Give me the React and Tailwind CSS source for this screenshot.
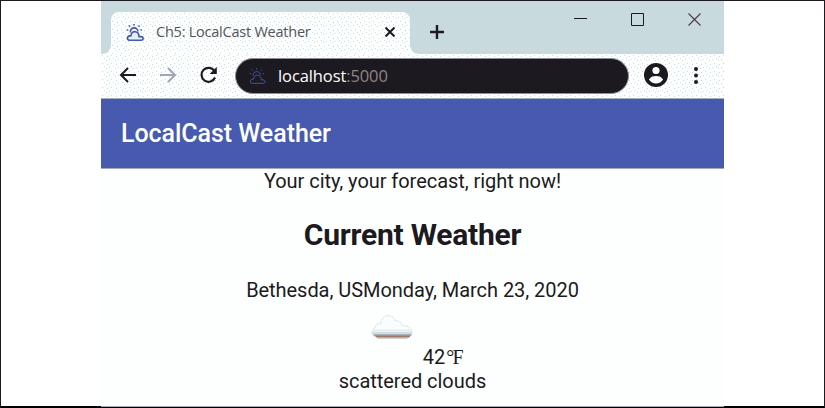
import React from "react";

function Dither({ id }) {
  return (
    <svg className="absolute inset-0 h-full w-full" shapeRendering="crispEdges" aria-hidden="true">
      <defs>
        <pattern id={id} width="9" height="8" patternUnits="userSpaceOnUse">
          <path fill="#c9dcdf" d="M1 1h1v1h-1zM6 2h1v1h-1zM3 4h1v1h-1zM8 5h1v1h-1zM5 6h1v1h-1z" />
        </pattern>
      </defs>
      <rect width="100%" height="100%" fill={`url(#${id})`} />
    </svg>
  );
}

function WeatherIcon({ className, cloud }) {
  return (
    <svg className={className} viewBox="0 0 18 18" fill="none" stroke="#4658ac" aria-hidden="true">
      <path d="M4.500 8.500A3.800 3.800 0 1 1 12 7.500" />
      <path
        fill={cloud}
        d="M3.500 16.200h11.500c2.800 0 2.800-3.400 0-3.600h-2C13 6.200 5 6.200 5 11.600 .5 11.600.5 16.200 3.500 16.200z"
      />
      <path d="M8 0v1.500M3 1.500l1 1.200M13.500 1.500l-1 1.200M.8 6h1.500M14.500 6H16" />
    </svg>
  );
}

function Tab() {
  return (
    <div className="relative ml-[10px] mt-[11px] h-[42px] w-[299px]">
      <svg className="absolute -left-[10px] bottom-0 h-[10px] w-[10px]" viewBox="0 0 10 10" aria-hidden="true">
        <path d="M10 0v10H0Q10 10 10 0z" fill="#fcfffe" />
      </svg>
      <svg className="absolute -right-[10px] bottom-0 h-[10px] w-[10px]" viewBox="0 0 10 10" aria-hidden="true">
        <path d="M0 0v10h10Q0 10 0 0z" fill="#fcfffe" />
      </svg>
      <div className="relative flex h-full items-center overflow-hidden rounded-t-[8px] bg-[#fcfffe] pl-[15px] pr-[15px]">
        <Dither id="tab-dots" />
        <WeatherIcon className="relative h-[18px] w-[18px] stroke-[1.6]" cloud="#e4eff1" />
        <span className="relative -top-px ml-[12px] whitespace-nowrap font-['Open_Sans',sans-serif] text-[14.5px] leading-5 tracking-[-0.23px] text-[#55535c]">
          Ch5: LocalCast Weather
        </span>
        <svg className="relative -top-px ml-auto h-[10px] w-[10px]" viewBox="0 0 10 10" stroke="#1c1a20" strokeWidth="2" aria-hidden="true">
          <path d="M.5.5l9 9M9.500.5l-9 9" />
        </svg>
      </div>
    </div>
  );
}

function TitleBar() {
  return (
    <div className="flex h-[53px] shrink-0 bg-[#c8dade]">
      <Tab />
      <svg className="ml-[19px] mt-[23px] h-[16px] w-[16px]" viewBox="0 0 16 16" stroke="#1c1a20" strokeWidth="2.400" aria-hidden="true">
        <path d="M8 1v14M1 8h14" />
      </svg>
      <div className="ml-auto mr-[23px] mt-[12px] flex">
        <svg className="h-[13px] w-[13px]" viewBox="0 0 13 13" stroke="#1c1a20" aria-hidden="true">
          <path d="M0 5.500h13" />
        </svg>
        <svg className="ml-[44px] h-[13px] w-[13px]" viewBox="0 0 13 13" fill="none" stroke="#1c1a20" aria-hidden="true">
          <path d="M.5.5h12v12H.5z" />
        </svg>
        <svg className="ml-[44px] h-[13px] w-[13px]" viewBox="0 0 13 13" fill="none" stroke="#4a4148" strokeWidth="1.200" aria-hidden="true">
          <path d="M.5.5l12 12M12.500.5l-12 12" />
        </svg>
      </div>
    </div>
  );
}

function Toolbar() {
  return (
    <div className="relative flex h-[45px] shrink-0 items-center border-b border-[#a4b2bd] bg-[#fcfffe] pl-[18px]">
      <Dither id="toolbar-dots" />
      <svg className="relative -top-px h-[16px] w-[17px]" viewBox="0 0 17 16" fill="none" stroke="#1c1a20" strokeWidth="2" aria-hidden="true">
        <path d="M17 8H2M9 1L2 8l7 7" />
      </svg>
      <svg className="relative -top-px ml-[24px] h-[16px] w-[17px]" viewBox="0 0 17 16" fill="none" stroke="#a2a6b4" strokeWidth="2" aria-hidden="true">
        <path d="M0 8h15M8 1l7 7-7 7" />
      </svg>
      <svg className="relative -top-px ml-[22px] h-[18px] w-[19px]" viewBox="0 0 19 18" fill="none" stroke="#1c1a20" strokeWidth="2.200" aria-hidden="true">
        <path d="M15.400 5A7 7 0 1 0 16 11.500" />
        <path fill="#1c1a20" stroke="none" d="M17.800 1v7h-7.300z" />
      </svg>
      <div className="relative ml-[17px] flex h-[36px] w-[394px] items-center rounded-full border border-[#8b8d98] bg-[#1c1a20] pl-[13px]">
        <WeatherIcon className="h-[17px] w-[17px] stroke-[1]" cloud="none" />
        <span className="ml-[12px] whitespace-nowrap font-['Open_Sans',sans-serif] text-[16.5px] leading-6 tracking-[-0.1px] text-[#fcfffe]">
          <span className="font-medium">localhost</span>
          <span className="text-[#8f8584]">:5000</span>
        </span>
      </div>
      <svg className="relative -top-px ml-[15px] h-[24px] w-[24px]" viewBox="0 0 24 24" aria-hidden="true">
        <circle cx="12" cy="12" r="12" fill="#1c1a20" />
        <circle cx="12" cy="7.500" r="3.600" fill="#fcfffe" />
        <path fill="#fcfffe" d="M5 16.500q2-3.400 7-3.400t7 3.400q-2.500 3.900-7 3.900t-7-3.900z" />
      </svg>
      <svg className="relative -top-px ml-[26px] h-[17px] w-[4px]" viewBox="0 0 4 17" fill="#1c1a20" aria-hidden="true">
        <circle cx="2" cy="2" r="2" />
        <circle cx="2" cy="8.500" r="2" />
        <circle cx="2" cy="15" r="2" />
      </svg>
    </div>
  );
}

function CloudIcon() {
  return (
    <svg className="mr-[10px] h-[24px] w-[42px]" viewBox="0 0 42 24" aria-hidden="true">
      <path
        fill="#fafdfd"
        stroke="#c9dcdf"
        strokeDasharray="1.500 1"
        d="M3 21C0 20 0 14 4 13c-1-3 3-5 6-4C10-2 23-1 24 6c4-1 7 2 7 5 5-1 10 2 10 7 0 2-2 4-4 4H5z"
      />
      <path fill="#e9f1f3" d="M2 14h38v3H1z" />
      <path fill="#d0dfe2" d="M1 17h40v2H1z" />
      <path fill="#a8b1bb" d="M2 19h38.500v2H3z" />
      <path fill="#a27766" d="M4 20.500h35v1.800H5z" />
      <path fill="#9da5b0" d="M5 22.300h33l-2 1.200H7z" />
    </svg>
  );
}

export default function App() {
  return (
    <div className="flex h-[408px] w-[825px] flex-col border border-x-[#1c1a20] border-b-black border-t-[#1c1a20] bg-black">
      <div className="flex h-[406px] justify-center border-b border-black bg-white">
        <div className="-mb-px flex h-[406px] w-[623px] flex-col border-b border-[#a4a9b8] bg-[#fdffff] font-[Roboto,sans-serif] text-[#1c1a20]">
          <TitleBar />
          <Toolbar />
          <header className="flex h-[69px] shrink-0 items-center bg-[#485aaf] pl-[20px] text-[25px] font-medium tracking-[-0.05px] text-[#fdffff]">
            LocalCast Weather
          </header>
          <main className="border-t border-[#a4a9b8] text-center text-[20px] leading-6 tracking-[-0.05px]">
            <div>Your city, your forecast, right now!</div>
            <h2 className="mt-[24px] text-[30px] font-bold leading-9 tracking-[-0.23px]">Current Weather</h2>
            <div className="mt-[25px]">Bethesda, USMonday, March 23, 2020</div>
            <div className="mt-[13px] flex h-[54px] items-start justify-center pl-[8px]">
              <CloudIcon />
              <span className="mt-[30px] flex">
                42
                <span className="ml-px font-['Liberation_Serif',serif] text-[20px] tracking-[-1.5px]">°F</span>
              </span>
            </div>
            <div>scattered clouds</div>
          </main>
        </div>
      </div>
    </div>
  );
}
